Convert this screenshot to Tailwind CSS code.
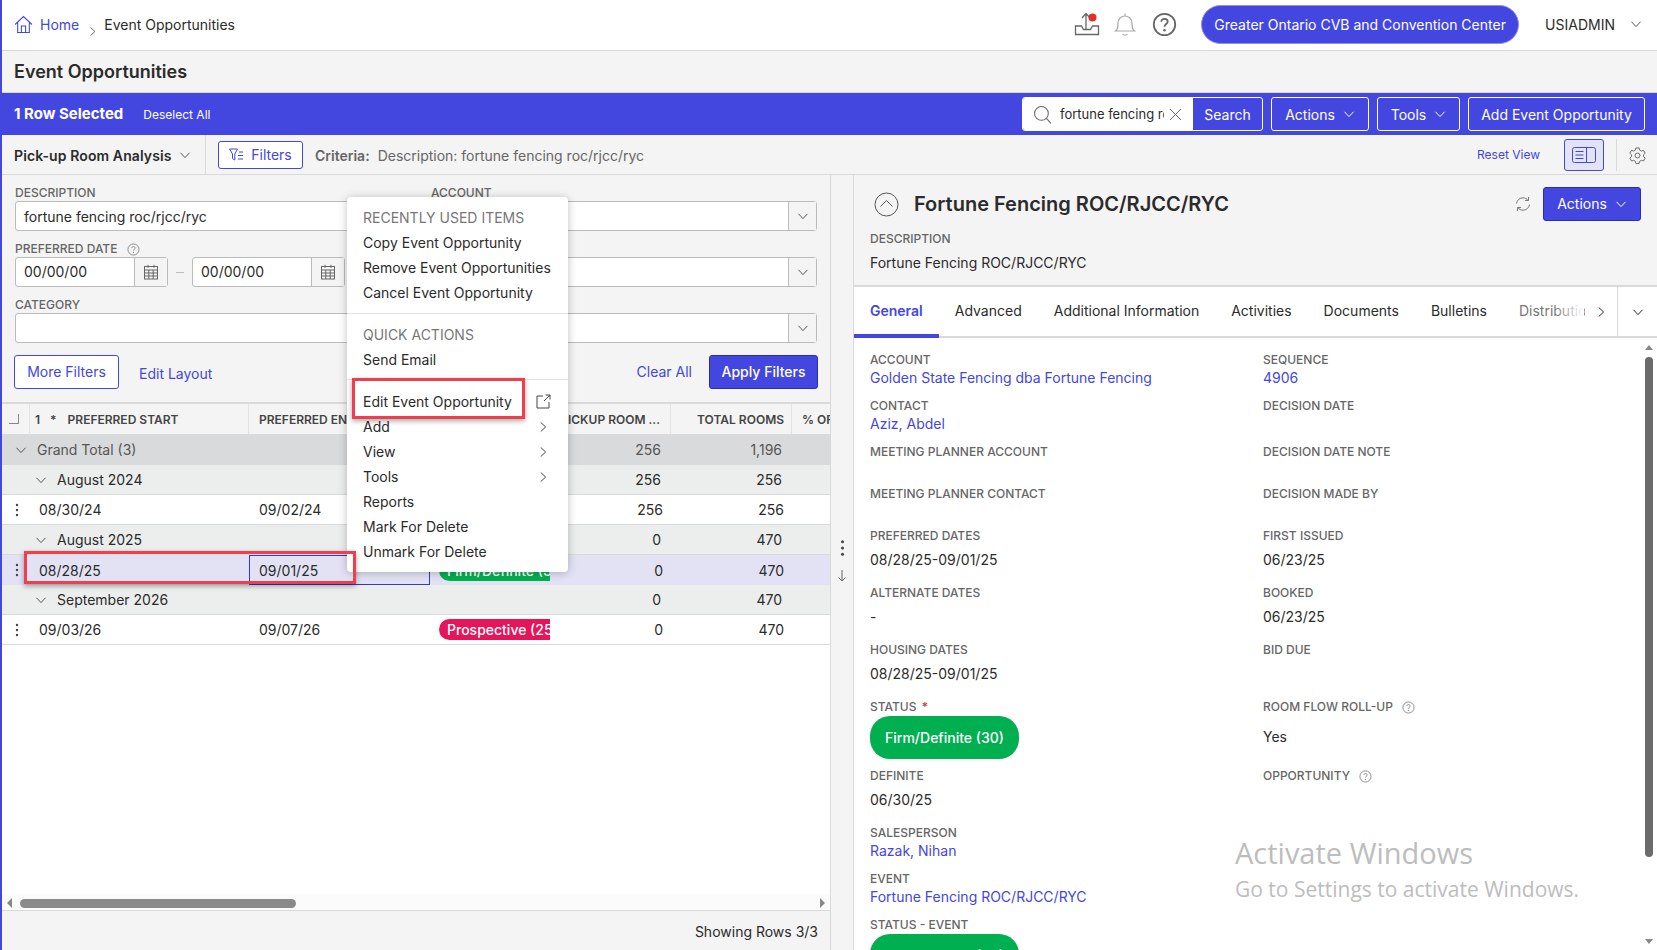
<!DOCTYPE html>
<html lang="en">
<head>
  <meta charset="UTF-8" />
  <title>Event Opportunities</title>
  <script src="https://cdn.jsdelivr.net/npm/@tailwindcss/browser@4"></script>
</head>
<body class="overflow-hidden bg-white">
  <svg class="hidden">
    <symbol id="down" viewBox="0 0 12 12"><path d="M1.5 3.8 6 8.6l4.5-4.8" fill="none" stroke="currentColor" stroke-width="1"/></symbol>
    <symbol id="right" viewBox="0 0 12 12"><path d="M3.8 1.5 8.6 6l-4.8 4.5" fill="none" stroke="currentColor" stroke-width="1"/></symbol>
    <symbol id="cal" viewBox="0 0 16 16"><g fill="none" stroke="currentColor" stroke-width="1"><rect x="1.5" y="2.5" width="13" height="12.5"/><path d="M1.5 6h13M1.5 9h13M1.5 12h13M5.8 6v9M10.2 6v9M5 .8v3M11 .8v3"/></g></symbol>
    <symbol id="help" viewBox="0 0 14 14"><circle cx="7" cy="7" r="6" fill="none" stroke="currentColor"/><path d="M5.2 5.5C5.2 4.4 6 3.8 7 3.8s1.8.7 1.8 1.6c0 1.3-1.8 1.4-1.8 2.9" fill="none" stroke="currentColor"/><circle cx="7" cy="10.2" r=".7" fill="currentColor"/></symbol>
    <symbol id="kebab" viewBox="0 0 4 14"><circle cx="2" cy="2" r="1.2" fill="currentColor"/><circle cx="2" cy="7" r="1.2" fill="currentColor"/><circle cx="2" cy="12" r="1.2" fill="currentColor"/></symbol>
  </svg>

  <div class="relative flex h-[950px] w-[1657px] flex-col overflow-hidden border-l-2 border-[#4347e0] bg-[#f4f4f4] font-['Inter',sans-serif] text-[14px] text-[#2b2b2b]">

    <!-- top header -->
    <header class="flex h-[51px] shrink-0 items-center border-b border-[#d9d9d9] bg-white pb-[2px] pl-[12px] pr-[15px]">
      <svg class="h-[19px] w-[19px] text-[#4347e0]" viewBox="0 0 18 18" fill="none" stroke="currentColor" stroke-width="1"><path d="M1 9 9 1.5 17 9M3.5 7v9.5h11V7M7 16.5V10.500h4v6"/></svg>
      <a class="ml-[7px] text-[#4347e0]">Home</a>
      <svg class="ml-[8px] mt-[14px] h-[11px] w-[11px] text-[#555]"><use href="#right"/></svg>
      <span class="ml-[6px]">Event Opportunities</span>
      <div class="ml-auto flex items-center">
        <svg class="h-[27px] w-[26px] text-[#666]" viewBox="0 0 26 27" fill="none" stroke="currentColor" stroke-width="1.3"><path d="M12 18V3M8 7l4-4.500 4 4.500M1.500 15v8.500h23V15h-6l-2 3.500h-7l-2-3.500z"/><circle cx="18.500" cy="6.500" r="4" fill="#e03127" stroke="none"/></svg>
        <svg class="ml-[13px] h-[25px] w-[24px] text-[#aaa]" viewBox="0 0 24 25" fill="none" stroke="currentColor" stroke-width="1.200"><path d="M2.500 19c2.500-2 2.500-4 2.500-8 0-4 3-7 7-7s7 3 7 7c0 4 0 6 2.500 8zM12 1.500V4M9.500 22c1 1.500 4 1.500 5 0"/></svg>
        <svg class="ml-[15px] h-[25px] w-[25px] text-[#666]" viewBox="0 0 14 14"><use href="#help"/></svg>
        <button class="ml-[24px] h-[39px] w-[318px] rounded-full border border-[#8d90ec] bg-[#4347e0] text-white">Greater Ontario CVB and Convention Center</button>
        <span class="ml-[26px]">USIADMIN</span>
        <svg class="ml-[15px] h-[12px] w-[12px] text-[#555]"><use href="#down"/></svg>
      </div>
    </header>

    <!-- page title -->
    <div class="flex h-[42px] shrink-0 items-center border-b border-[#d9d9d9] pl-[12px] text-[18px] font-semibold">Event Opportunities</div>

    <!-- selection bar -->
    <div class="flex h-[42px] shrink-0 items-center bg-[#4347e0] pl-[12px] pr-[12px] text-white">
      <span class="text-[15px] font-bold">1 Row Selected</span>
      <span class="ml-[20px] pt-[1px] text-[12px]">Deselect All</span>
      <div class="ml-auto flex items-center gap-[8px]">
        <div class="flex h-[34px] w-[241px] overflow-hidden rounded-[3px] border border-white">
          <div class="flex w-[170px] items-center bg-white pl-[10px] text-[13px] text-[#2b2b2b]">
            <svg class="h-[19px] w-[19px] shrink-0 text-[#666]" viewBox="0 0 18 18" fill="none" stroke="currentColor"><circle cx="8" cy="8" r="6.500"/><path d="m12.500 12.500 4.500 5"/></svg>
            <span class="ml-[8px] w-[104px] shrink-0 overflow-hidden whitespace-nowrap pt-[1px]">fortune fencing roc/rjcc/ryc</span>
            <svg class="ml-[5px] h-[13px] w-[13px] shrink-0 text-[#666]" viewBox="0 0 13 13" fill="none" stroke="currentColor"><path d="m1 1 11 11M12 1 1 12"/></svg>
          </div>
          <div class="flex flex-1 items-center justify-center">Search</div>
        </div>
        <button class="flex h-[34px] w-[98px] items-center justify-center gap-[8px] rounded-[3px] border border-white">Actions <svg class="h-[12px] w-[12px]"><use href="#down"/></svg></button>
        <button class="flex h-[34px] w-[83px] items-center justify-center gap-[8px] rounded-[3px] border border-white">Tools <svg class="h-[12px] w-[12px]"><use href="#down"/></svg></button>
        <button class="h-[34px] w-[177px] rounded-[3px] border border-white">Add Event Opportunity</button>
      </div>
    </div>

    <!-- view toolbar -->
    <div class="flex h-[40px] shrink-0 items-center border-b border-[#d9d9d9] pl-[12px]">
      <span class="w-[158px] pt-[2px] font-semibold tracking-[0.1px]">Pick-up Room Analysis</span>
      <svg class="ml-[7px] h-[12px] w-[12px] text-[#555]"><use href="#down"/></svg>
      <div class="ml-[14px] h-full w-px bg-[#d9d9d9]"></div>
      <button class="ml-[12px] flex h-[28px] w-[85px] items-center justify-center gap-[7px] rounded-[3px] border border-[#4347e0] bg-white text-[#4347e0]">
        <svg class="h-[14px] w-[15px]" viewBox="0 0 15 14" fill="none" stroke="currentColor"><path d="M.5 1h8L5.800 6v6L3.500 10.500V6zM10 4h4M9 7.500h5M9 11h5"/></svg>
        Filters
      </button>
      <span class="ml-[12px] pt-[2px] font-semibold text-[#666]">Criteria:</span>
      <span class="ml-[8px] pt-[2px] text-[#666]">Description: fortune fencing roc/rjcc/ryc</span>
      <div class="ml-auto flex items-center">
        <a class="text-[12px] text-[#4347e0]">Reset View</a>
        <button class="ml-[24px] flex h-[32px] w-[40px] items-center justify-center rounded-[3px] border border-[#4347e0] bg-[#e3e3f8]">
          <svg class="h-[16px] w-[24px] text-[#4347e0]" viewBox="0 0 24 16" fill="none" stroke="currentColor"><rect x=".5" y=".5" width="23" height="15" rx="2"/><path d="M14.500 .5v15M3.500 4.500h8M3.500 8h8M3.500 11.500h8"/></svg>
        </button>
        <div class="ml-[12px] h-[32px] w-px bg-[#d9d9d9]"></div>
        <svg class="ml-[12px] mr-[11px] mt-[2px] h-[17px] w-[17px] text-[#666]" viewBox="0 0 18 18" fill="none" stroke="currentColor"><path d="M7.300 1h3.400l.6 2.300 1.800 1 2.300-.7 1.700 3-1.700 1.600v2l1.700 1.600-1.700 3-2.300-.7-1.800 1-.6 2.300H7.300l-.6-2.300-1.800-1-2.300.7-1.700-3 1.700-1.600v-2L.9 6.600l1.700-3 2.300.7 1.800-1z" stroke-linejoin="round"/><circle cx="9" cy="9" r="2.600"/></svg>
      </div>
    </div>

    <!-- main area -->
    <div class="flex min-h-0 flex-1">
      <!-- left: filters and grid -->
      <section class="flex w-[828px] shrink-0 flex-col">
        <div class="h-[229px] shrink-0 border-b-2 border-[#d9d9d9] pl-[13px] pr-[11px] pt-[10px]">
          <div class="grid grid-cols-[401px_386px] gap-x-[15px]">
            <div class="h-[56px]">
              <div class="h-[16px] text-[12px] font-medium leading-[16px] text-[#666]">DESCRIPTION</div>
              <div class="flex h-[30px] items-center rounded-[3px] border border-[#bbb] bg-white pl-[8px]">fortune fencing roc/rjcc/ryc</div>
            </div>
            <div class="h-[56px]">
              <div class="h-[16px] text-[12px] font-medium leading-[16px] text-[#666]">ACCOUNT</div>
              <div class="flex h-[30px] justify-end rounded-[3px] border border-[#bbb] bg-white"><span class="flex w-[28px] items-center justify-center border-l border-[#bbb] bg-[#f4f4f4] text-[#555]"><svg class="h-[12px] w-[12px]"><use href="#down"/></svg></span></div>
            </div>
            <div class="h-[56px]">
              <div class="flex h-[16px] items-center gap-[10px] text-[12px] font-medium text-[#666]">PREFERRED DATE <svg class="h-[13px] w-[13px] text-[#888]"><use href="#help"/></svg></div>
              <div class="flex items-center">
                <div class="flex h-[30px] w-[153px] rounded-[3px] border border-[#bbb] bg-white"><span class="flex flex-1 items-center pb-[1px] pl-[8px]">00/00/00</span><span class="flex w-[33px] items-center justify-center border-l border-[#bbb] bg-[#f4f4f4] text-[#666]"><svg class="h-[16px] w-[16px]"><use href="#cal"/></svg></span></div>
                <span class="mx-[8px] h-[1px] w-[8px] bg-[#bbb]"></span>
                <div class="flex h-[30px] w-[153px] rounded-[3px] border border-[#bbb] bg-white"><span class="flex flex-1 items-center pb-[1px] pl-[8px]">00/00/00</span><span class="flex w-[33px] items-center justify-center border-l border-[#bbb] bg-[#f4f4f4] text-[#666]"><svg class="h-[16px] w-[16px]"><use href="#cal"/></svg></span></div>
              </div>
            </div>
            <div class="h-[56px] pt-[16px]">
              <div class="flex h-[30px] justify-end rounded-[3px] border border-[#bbb] bg-white"><span class="flex w-[28px] items-center justify-center border-l border-[#bbb] bg-[#f4f4f4] text-[#555]"><svg class="h-[12px] w-[12px]"><use href="#down"/></svg></span></div>
            </div>
            <div class="h-[56px]">
              <div class="h-[16px] text-[12px] font-medium leading-[16px] text-[#666]">CATEGORY</div>
              <div class="h-[30px] rounded-[3px] border border-[#bbb] bg-white"></div>
            </div>
            <div class="h-[56px] pt-[16px]">
              <div class="flex h-[30px] justify-end rounded-[3px] border border-[#bbb] bg-white"><span class="flex w-[28px] items-center justify-center border-l border-[#bbb] bg-[#f4f4f4] text-[#555]"><svg class="h-[12px] w-[12px]"><use href="#down"/></svg></span></div>
            </div>
          </div>
          <div class="-ml-px mr-px mt-[2px] flex items-center">
            <button class="h-[34px] w-[105px] rounded-[3px] border border-[#4347e0] bg-white pb-[2px] text-[#4347e0]">More Filters</button>
            <a class="ml-[20px] mt-[2px] text-[#4347e0]">Edit Layout</a>
            <a class="ml-auto pb-[2px] text-[#4347e0]">Clear All</a>
            <button class="ml-[17px] h-[34px] w-[109px] rounded-[3px] border border-[#2a2db5] bg-[#4347e0] pb-[2px] font-medium text-white">Apply Filters</button>
          </div>
        </div>

        <!-- grid -->
        <div class="grid h-[30px] shrink-0 grid-cols-[28px_219px_181px_120px_121px_121px_38px] bg-[#f4f4f4] text-[12px] font-semibold leading-[32px] text-[#444]">
          <div class="relative border-r border-[#e3e3e3]"><span class="absolute left-[7px] top-[10px] h-[10px] w-[10px] border-b border-r border-[#888]"></span></div>
          <div class="flex border-r border-[#e3e3e3] pl-[5px]"><span>1</span><span class="ml-[10px]">*</span><span class="ml-[11px]">PREFERRED START</span></div>
          <div class="overflow-hidden whitespace-nowrap border-r border-[#e3e3e3] pl-[10px]">PREFERRED END</div>
          <div class="border-r border-[#e3e3e3]"></div>
          <div class="overflow-hidden whitespace-nowrap border-r border-[#e3e3e3] pr-[10px] text-right">PICKUP ROOM ...</div>
          <div class="border-r border-[#e3e3e3] pr-[7px] text-right">TOTAL ROOMS</div>
          <div class="overflow-hidden whitespace-nowrap pl-[10px]">% OF</div>
        </div>
        <div class="grid h-[31px] shrink-0 grid-cols-[247px_181px_120px_121px_121px_38px] items-center bg-[#d9dadb] text-[#555]">
          <div class="flex items-center pl-[13px]"><svg class="h-[12px] w-[12px]"><use href="#down"/></svg><span class="ml-[10px]">Grand Total (3)</span></div>
          <div></div><div></div>
          <div class="pr-[10px] text-right">256</div>
          <div class="pr-[10px] text-right">1,196</div>
          <div></div>
        </div>
        <div class="grid h-[30px] shrink-0 grid-cols-[247px_181px_120px_121px_121px_38px] items-center border-b border-[#d9dadb] bg-[#eceeee]">
          <div class="flex items-center pl-[33px]"><svg class="h-[12px] w-[12px] text-[#555]"><use href="#down"/></svg><span class="ml-[10px]">August 2024</span></div>
          <div></div><div></div>
          <div class="pr-[10px] text-right">256</div>
          <div class="pr-[10px] text-right">256</div>
          <div></div>
        </div>
        <div class="grid h-[30px] shrink-0 grid-cols-[28px_219px_181px_120px_121px_121px_38px] items-center border-b border-[#d9dadb] bg-white">
          <div class="pl-[13px]"><svg class="h-[14px] w-[4px] text-[#444]"><use href="#kebab"/></svg></div>
          <div class="pl-[9px]">08/30/24</div>
          <div class="pl-[10px]">09/02/24</div>
          <div></div>
          <div class="pr-[8px] text-right">256</div>
          <div class="pr-[8px] text-right">256</div>
          <div></div>
        </div>
        <div class="grid h-[30px] shrink-0 grid-cols-[247px_181px_120px_121px_121px_38px] items-center border-b border-[#d9dadb] bg-[#eceeee]">
          <div class="flex items-center pl-[33px]"><svg class="h-[12px] w-[12px] text-[#555]"><use href="#down"/></svg><span class="ml-[10px]">August 2025</span></div>
          <div></div><div></div>
          <div class="pr-[10px] text-right">0</div>
          <div class="pr-[10px] text-right">470</div>
          <div></div>
        </div>
        <div class="grid h-[30px] shrink-0 grid-cols-[28px_219px_181px_120px_121px_121px_38px] items-center bg-[#e3e2f5]">
          <div class="pl-[13px]"><svg class="h-[14px] w-[4px] text-[#444]"><use href="#kebab"/></svg></div>
          <div class="pl-[9px]">08/28/25</div>
          <div class="flex h-[30px] items-center border border-[#3538c8] pl-[9px]">09/01/25</div>
          <div class="overflow-hidden pl-[9px]"><span class="block h-[21px] w-[140px] rounded-full bg-[#00b050] pl-[8px] font-medium leading-[21px] whitespace-nowrap text-white">Firm/Definite (30)</span></div>
          <div class="pr-[8px] text-right">0</div>
          <div class="pr-[8px] text-right">470</div>
          <div></div>
        </div>
        <div class="grid h-[30px] shrink-0 grid-cols-[247px_181px_120px_121px_121px_38px] items-center border-b border-[#d9dadb] bg-[#eceeee]">
          <div class="flex items-center pl-[33px]"><svg class="h-[12px] w-[12px] text-[#555]"><use href="#down"/></svg><span class="ml-[10px]">September 2026</span></div>
          <div></div><div></div>
          <div class="pr-[10px] text-right">0</div>
          <div class="pr-[10px] text-right">470</div>
          <div></div>
        </div>
        <div class="grid h-[30px] shrink-0 grid-cols-[28px_219px_181px_120px_121px_121px_38px] items-center border-b border-[#d9dadb] bg-white">
          <div class="pl-[13px]"><svg class="h-[14px] w-[4px] text-[#444]"><use href="#kebab"/></svg></div>
          <div class="pl-[9px]">09/03/26</div>
          <div class="pl-[10px]">09/07/26</div>
          <div class="overflow-hidden pl-[9px]"><span class="block h-[21px] w-[140px] rounded-full bg-[#e6155a] pl-[8px] font-medium leading-[21px] whitespace-nowrap text-white">Prospective (25)</span></div>
          <div class="pr-[8px] text-right">0</div>
          <div class="pr-[8px] text-right">470</div>
          <div></div>
        </div>
        <div class="flex-1 bg-white"></div>
        <!-- horizontal scrollbar -->
        <div class="flex h-[17px] shrink-0 items-center border-b border-[#d9d9d9] bg-[#fbfbfb] pl-[5px] pr-[5px] pt-[2px]">
          <span class="h-0 w-0 border-y-[5px] border-r-[5px] border-y-transparent border-r-[#888]"></span>
          <span class="ml-[8px] h-[9px] w-[276px] rounded-full bg-[#8a8a8a]"></span>
          <span class="ml-auto h-0 w-0 border-y-[5px] border-l-[5px] border-y-transparent border-l-[#888]"></span>
        </div>
        <div class="flex h-[39px] shrink-0 items-center justify-end pr-[12px] pt-[2px]">Showing Rows 3/3</div>
      </section>

      <!-- splitter -->
      <div class="flex w-[24px] shrink-0 flex-col items-center border-x border-[#d9d9d9] pt-[364px] text-[#444]">
        <svg class="h-[18px] w-[5px]" viewBox="0 0 4 14"><use href="#kebab"/></svg>
        <svg class="mt-[13px] h-[12px] w-[10px] text-[#666]" viewBox="0 0 10 12" fill="none" stroke="currentColor"><path d="M5 0v11M1.500 7.500 5 11l3.500-3.500"/></svg>
      </div>

      <!-- right: detail panel -->
      <section class="relative flex min-w-0 flex-1 flex-col">
        <div class="h-[112px] shrink-0 border-b-2 border-[#d9d9d9] pl-[16px] pr-[16px]">
          <div class="flex h-[46px] items-center pt-[12px]">
            <svg class="ml-[4px] h-[25px] w-[25px] text-[#555]" viewBox="0 0 25 25" fill="none" stroke="currentColor"><circle cx="12.500" cy="12.500" r="11.500"/><path d="m6.500 14.500 6-6 6 6"/></svg>
            <h1 class="ml-[15px] text-[20px] font-semibold">Fortune Fencing ROC/RJCC/RYC</h1>
            <svg class="ml-auto h-[16px] w-[16px] text-[#777]" viewBox="0 0 16 16" fill="none" stroke="currentColor"><path d="M1.500 7.500C2 4 4.800 1.800 8 1.800c2 0 3.700.8 5 2.500M14.500 8.500c-.5 3.500-3.300 5.700-6.500 5.700-2 0-3.700-.8-5-2.500M13.500 1v3.500H10M2.500 15v-3.500H6"/></svg>
            <button class="ml-[12px] flex h-[34px] w-[98px] items-center justify-center gap-[8px] rounded-[3px] border border-[#2a2db5] bg-[#4347e0] pb-[1px] text-white">Actions <svg class="h-[12px] w-[12px]"><use href="#down"/></svg></button>
          </div>
          <div class="mt-[10px] text-[12px] font-medium leading-[16px] text-[#666]">DESCRIPTION</div>
          <div class="mt-[7px] leading-[17px]">Fortune Fencing ROC/RJCC/RYC</div>
        </div>

        <!-- tabs -->
        <div class="relative flex h-[51px] shrink-0 items-center gap-[32px] border-b-2 border-[#d9d9d9] bg-white pb-[2px] pl-[16px]">
          <span class="font-semibold text-[#4347e0]">General</span>
          <span>Advanced</span>
          <span>Additional Information</span>
          <span>Activities</span>
          <span>Documents</span>
          <span>Bulletins</span>
          <span class="w-[66px] overflow-hidden whitespace-nowrap text-[#777]">Distribution</span>
          <span class="absolute left-[700px] top-0 h-full w-[30px] bg-gradient-to-r from-white/0 to-white"></span>
          <span class="absolute bottom-[-2px] left-0 h-[4px] w-[85px] bg-[#4347e0]"></span>
          <div class="absolute right-0 top-0 flex h-full w-[40px] items-center justify-center border-l border-[#d9d9d9]">
            <svg class="h-[12px] w-[12px]"><use href="#down"/></svg>
          </div>
          <svg class="absolute left-[741px] top-[19px] h-[12px] w-[12px]"><use href="#right"/></svg>
        </div>

        <!-- detail fields -->
        <div class="relative min-h-0 flex-1 overflow-hidden bg-white pl-[16px] pt-[13px]">
          <div class="grid w-[785px] grid-cols-[393px_1fr] grid-rows-[46px_46px_42px_42px_57px_57px_57px_69px_57px_46px_46px_60px] text-[12px]">
            <div><div class="font-medium leading-[18px] text-[#666]">ACCOUNT</div><a class="text-[14px] leading-[18px] text-[#4347e0]">Golden State Fencing dba Fortune Fencing</a></div>
            <div><div class="font-medium leading-[18px] text-[#666]">SEQUENCE</div><a class="text-[14px] leading-[18px] text-[#4347e0]">4906</a></div>
            <div><div class="font-medium leading-[18px] text-[#666]">CONTACT</div><a class="text-[14px] leading-[18px] text-[#4347e0]">Aziz, Abdel</a></div>
            <div class="font-medium leading-[18px] text-[#666]">DECISION DATE</div>
            <div class="font-medium leading-[18px] text-[#666]">MEETING PLANNER ACCOUNT</div>
            <div class="font-medium leading-[18px] text-[#666]">DECISION DATE NOTE</div>
            <div class="font-medium leading-[18px] text-[#666]">MEETING PLANNER CONTACT</div>
            <div class="font-medium leading-[18px] text-[#666]">DECISION MADE BY</div>
            <div><div class="font-medium leading-[18px] text-[#666]">PREFERRED DATES</div><div class="mt-[6px] text-[14px] leading-[18px]">08/28/25-09/01/25</div></div>
            <div><div class="font-medium leading-[18px] text-[#666]">FIRST ISSUED</div><div class="mt-[6px] text-[14px] leading-[18px]">06/23/25</div></div>
            <div><div class="font-medium leading-[18px] text-[#666]">ALTERNATE DATES</div><div class="mt-[6px] text-[14px] leading-[18px]">-</div></div>
            <div><div class="font-medium leading-[18px] text-[#666]">BOOKED</div><div class="mt-[6px] text-[14px] leading-[18px]">06/23/25</div></div>
            <div><div class="font-medium leading-[18px] text-[#666]">HOUSING DATES</div><div class="mt-[6px] text-[14px] leading-[18px]">08/28/25-09/01/25</div></div>
            <div class="font-medium leading-[18px] text-[#666]">BID DUE</div>
            <div><div class="font-medium leading-[18px] text-[#666]">STATUS <span class="ml-[2px] text-[#e03127]">*</span></div><div class="flex h-[43px] w-[149px] items-center justify-center rounded-[20px] bg-[#00b050] pb-[1px] text-[14px] font-medium text-white">Firm/Definite (30)</div></div>
            <div><div class="flex h-[18px] items-center gap-[9px] font-medium text-[#666]">ROOM FLOW ROLL-UP <svg class="h-[13px] w-[13px] text-[#888]"><use href="#help"/></svg></div><div class="mt-[12px] text-[14px] leading-[18px]">Yes</div></div>
            <div><div class="font-medium leading-[18px] text-[#666]">DEFINITE</div><div class="mt-[6px] text-[14px] leading-[18px]">06/30/25</div></div>
            <div class="flex h-[18px] items-center gap-[9px] font-medium text-[#666]">OPPORTUNITY <svg class="h-[13px] w-[13px] text-[#888]"><use href="#help"/></svg></div>
            <div><div class="font-medium leading-[18px] text-[#666]">SALESPERSON</div><a class="text-[14px] leading-[18px] text-[#4347e0]">Razak, Nihan</a></div>
            <div></div>
            <div><div class="font-medium leading-[18px] text-[#666]">EVENT</div><a class="text-[14px] leading-[18px] text-[#4347e0]">Fortune Fencing ROC/RJCC/RYC</a></div>
            <div></div>
            <div><div class="font-medium leading-[18px] text-[#666]">STATUS - EVENT</div><div class="flex h-[43px] w-[149px] items-center justify-center rounded-[20px] bg-[#00b050] text-[14px] font-medium text-white">Firm/Definite (30)</div></div>
          </div>
          <!-- vertical scrollbar -->
          <span class="absolute right-[4px] top-[7px] h-0 w-0 border-x-[4px] border-b-[5px] border-x-transparent border-b-[#888]"></span>
          <span class="absolute right-[4px] top-[19px] h-[500px] w-[8px] rounded-full bg-[#6b6b6b]"></span>
          <span class="absolute bottom-[6px] right-[4px] h-0 w-0 border-x-[4px] border-t-[5px] border-x-transparent border-t-[#888]"></span>
        </div>

        <!-- windows activation watermark -->
        <div class="pointer-events-none absolute left-[381px] top-[659px] font-['Open_Sans',sans-serif] text-[#bdbdbd]">
          <div class="text-[29px] leading-[38px]">Activate Windows</div>
          <div class="mt-[2px] text-[21px] leading-[30px]">Go to Settings to activate Windows.</div>
        </div>
      </section>
    </div>

    <!-- context menu -->
    <div class="absolute left-[345px] top-[197px] h-[375px] w-[221px] rounded-[4px] bg-white pl-[16px] pt-[8px] leading-[25px] shadow-[0_1px_8px_rgba(0,0,0,0.25)]">
      <div class="text-[#777]">RECENTLY USED ITEMS</div>
      <div>Copy Event Opportunity</div>
      <div>Remove Event Opportunities</div>
      <div>Cancel Event Opportunity</div>
      <div class="-ml-[16px] mb-[8px] mt-[8px] h-px bg-[#e3e3e3]"></div>
      <div class="text-[#777]">QUICK ACTIONS</div>
      <div>Send Email</div>
      <div class="-ml-[16px] mb-[9px] mt-[7px] h-px bg-[#e3e3e3]"></div>
      <div class="flex items-center justify-between pr-[17px]">Edit Event Opportunity
        <svg class="h-[15px] w-[15px] text-[#444]" viewBox="0 0 15 15" fill="none" stroke="currentColor"><path d="M7 2H1v12h12V8M8 7l6-6M9.500 1H14v4.500"/></svg>
      </div>
      <div class="flex items-center justify-between pr-[19px]">Add <svg class="h-[12px] w-[12px] text-[#444]"><use href="#right"/></svg></div>
      <div class="flex items-center justify-between pr-[19px]">View <svg class="h-[12px] w-[12px] text-[#444]"><use href="#right"/></svg></div>
      <div class="flex items-center justify-between pr-[19px]">Tools <svg class="h-[12px] w-[12px] text-[#444]"><use href="#right"/></svg></div>
      <div>Reports</div>
      <div>Mark For Delete</div>
      <div>Unmark For Delete</div>
    </div>

    <!-- red callouts -->
    <div class="absolute left-[350px] top-[378px] h-[41px] w-[173px] border-[3px] border-[#ef3f4c] shadow-[0_2px_5px_rgba(0,0,0,0.35)]"></div>
    <div class="absolute left-[22px] top-[551px] h-[33px] w-[332px] border-[3px] border-[#ef3f4c] shadow-[0_2px_5px_rgba(0,0,0,0.35)]"></div>
  </div>
</body>
</html>
